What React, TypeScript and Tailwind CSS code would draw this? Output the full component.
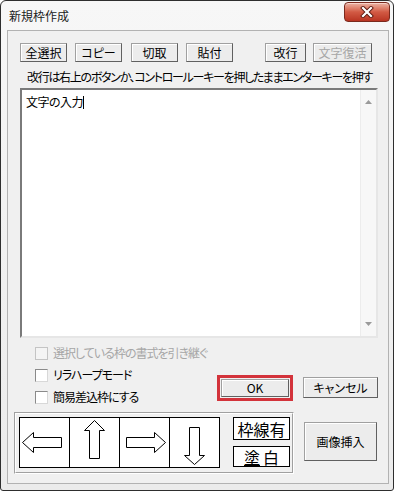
import React from 'react';

const jp = "font-['Noto_Sans_CJK_JP',sans-serif] [font-feature-settings:'palt']";

function Btn({ children, className = '', disabled = false }: { children: React.ReactNode; className?: string; disabled?: boolean }) {
  return (
    <div
      className={`flex items-center justify-center border border-[#a0a0a0] border-r-[#606060] border-b-[#606060] bg-[#ececec] shadow-[inset_1px_1px_0_#ffffff] text-[12px] leading-none ${disabled ? 'text-[#a6a6a6]' : 'text-black'} ${className}`}
    >
      {children}
    </div>
  );
}

function Check({ label, disabled = false }: { label: string; disabled?: boolean }) {
  return (
    <div className="flex h-[22px] items-center gap-[5px] whitespace-nowrap">
      <div
        className={`h-[13px] w-[13px] border ${disabled ? 'border-[#c4c4c4] bg-[#f4f4f4]' : 'border-[#8a8a8a] border-r-[#d8d8d8] border-b-[#d8d8d8] bg-white'}`}
      />
      <span className={`text-[12px] leading-none tracking-[-1px] ${disabled ? 'text-[#a6a6a6]' : 'text-black'}`}>{label}</span>
    </div>
  );
}

function Arrow({ points }: { points: string }) {
  return (
    <div className="h-[50px] w-[50px] border-r border-b border-black bg-white">
      <svg width="49" height="49" viewBox="1 1 49 49">
        <polygon points={points} fill="white" stroke="black" strokeWidth="1" />
      </svg>
    </div>
  );
}

export default function App() {
  return (
    <div className={`h-[494px] w-[398px] bg-white ${jp}`}>
      <div className="flex h-[491px] w-[394px] flex-col rounded-t-[6px] rounded-b-[3px] border border-[#2e2e2e] bg-gradient-to-b from-[#f7f7f7] to-[#ebebeb]">
        {/* title bar */}
        <div className="flex h-[29px] items-start">
          <span className="mt-[7px] ml-[8px] text-[12px] leading-[16px] text-[#1b1b1b]">新規枠作成</span>
          <div className="mt-[1px] mr-[3px] ml-auto flex h-[20px] w-[46px] items-center justify-center rounded-[4px] border border-[#7b2a1e] bg-gradient-to-b from-[#eab3a4] via-[#d25a44] to-[#b93422] shadow-[inset_0_1px_0_#f6d2c8]">
            <svg width="14" height="12" viewBox="0 0 14 12">
              <path d="M3 2 L11 10 M11 2 L3 10" stroke="#5b1a10" strokeWidth="4" strokeLinecap="square" />
              <path d="M3 2 L11 10 M11 2 L3 10" stroke="white" strokeWidth="2.2" strokeLinecap="square" />
            </svg>
          </div>
        </div>

        {/* client area */}
        <div className="mr-[4px] ml-[6px] flex h-[454px] flex-col border border-[#b2b2b2] bg-[#f0f0f0]">
          {/* button row */}
          <div className="mt-[12px] flex h-[19px] pl-[12px]">
            <Btn className="w-[47px]">全選択</Btn>
            <Btn className="ml-[8px] w-[47px]">コピー</Btn>
            <Btn className="ml-[9px] w-[47px]">切取</Btn>
            <Btn className="ml-[8px] w-[47px]">貼付</Btn>
            <Btn className="ml-[32px] w-[41px]">改行</Btn>
            <Btn className="ml-[7px] w-[59px]" disabled>
              文字復活
            </Btn>
          </div>

          {/* hint */}
          <div className="flex h-[26px] items-center pt-[4px] pl-[19px] text-[12px] leading-none tracking-[-1.3px] whitespace-nowrap text-black">
            改行は右上のボタンか、コントロールーキーを押したままエンターキーを押す
          </div>

          {/* text box */}
          <div className="ml-[12px] flex h-[250px] w-[358px] border-2 border-[#7a7a7a] border-r-[#e6e6e6] border-b-[#e6e6e6] bg-white">
            <div className="flex flex-1 items-start pt-[5px] pl-[4px]">
              <span className="text-[12px] leading-[14px] tracking-[-0.5px] text-black">文字の入力</span>
              <span className="mt-[1px] h-[13px] w-[1px] bg-black" />
            </div>
            <div className="flex w-[16px] flex-col items-center justify-between border-l border-[#ececec] bg-[#f7f7f7] py-[10px]">
              <svg width="7" height="4" viewBox="0 0 7 4">
                <polygon points="3.5,0 7,4 0,4" fill="#9a9a9a" />
              </svg>
              <svg width="7" height="4" viewBox="0 0 7 4">
                <polygon points="0,0 7,0 3.5,4" fill="#9a9a9a" />
              </svg>
            </div>
          </div>

          {/* options + OK / Cancel */}
          <div className="flex h-[74px]">
            <div className="flex w-[209px] flex-col pt-[4px] pl-[27px]">
              <Check label="選択している枠の書式を引き継ぐ" disabled />
              <Check label="リラハープモード" />
              <Check label="簡易差込枠にする" />
            </div>
            <div className="mt-[37px] h-[26px] w-[76px] border-[3px] border-[#d3333b] p-[1px]">
              <Btn className="h-full w-full">OK</Btn>
            </div>
            <Btn className="mt-[39px] ml-[10px] h-[21px] w-[75px]">キャンセル</Btn>
          </div>

          {/* arrows group + image button */}
          <div className="flex">
            <div className="ml-[6px] h-[62px] w-[280px] border border-[#a0a0a0] border-r-white border-b-white">
              <div className="flex h-full w-full border border-white border-r-[#a0a0a0] border-b-[#a0a0a0] pt-[3px] pl-[3px]">
                <div className="flex h-[51px] border-t border-l border-black">
                  <Arrow points="3.5,25.5 14.5,15.5 14.5,20.5 42.5,20.5 42.5,30.5 14.5,30.5 14.5,35.5" />
                  <Arrow points="25.5,3.5 35.5,13.5 30.5,13.5 30.5,41.5 20.5,41.5 20.5,13.5 15.5,13.5" />
                  <Arrow points="46.5,25.5 35.5,15.5 35.5,20.5 7.5,20.5 7.5,30.5 35.5,30.5 35.5,35.5" />
                  <Arrow points="25.5,47.5 35.5,38.5 30.5,38.5 30.5,10.5 20.5,10.5 20.5,38.5 15.5,38.5" />
                </div>
                <div className="ml-[13px] flex flex-col gap-[6px]">
                  <div className="flex h-[23px] w-[57px] items-center justify-center border border-black bg-white text-[16px] leading-none text-black">
                    枠線有
                  </div>
                  <div className="flex h-[21px] w-[57px] items-center justify-center gap-[3px] border border-black bg-white text-[16px] leading-none text-black">
                    <span className="underline underline-offset-[1px]">塗</span>
                    <span>白</span>
                  </div>
                </div>
              </div>
            </div>
            <Btn className="mt-[10px] ml-[10px] h-[39px] w-[73px]">画像挿入</Btn>
          </div>
        </div>
      </div>
    </div>
  );
}
